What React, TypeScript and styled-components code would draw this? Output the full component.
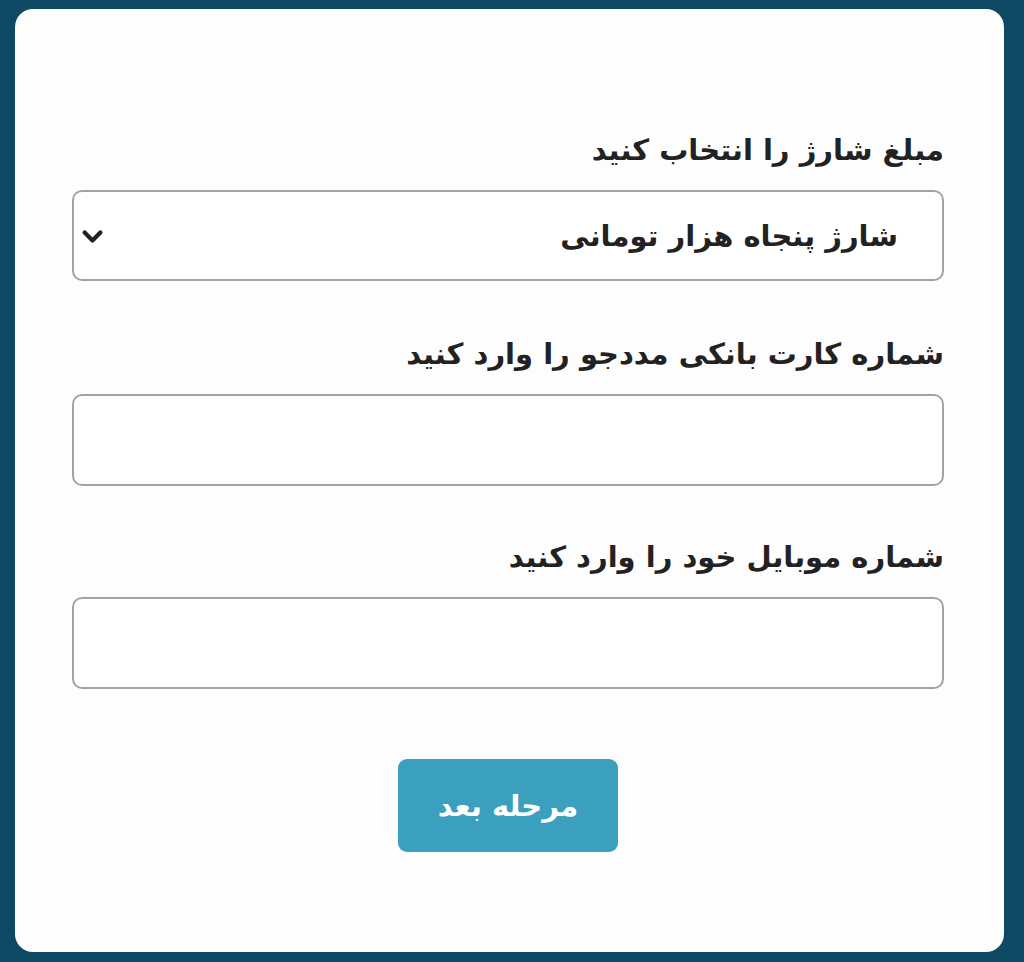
import React, { useState } from "react";
import styled, { createGlobalStyle } from "styled-components";

const GlobalStyle = createGlobalStyle`
  html, body {
    margin: 0;
    padding: 0;
    background-color: #0f4862;
  }
  * {
    box-sizing: border-box;
  }
`;

const options = [
  "شارژ ده هزار تومانی",
  "شارژ بیست هزار تومانی",
  "شارژ پنجاه هزار تومانی",
  "شارژ صد هزار تومانی",
];

const App: React.FC = () => {
  const [amount, setAmount] = useState(options[2]);

  return (
    <>
      <GlobalStyle />
      <Page>
        <Card dir="rtl">
          <Form onSubmit={(e) => e.preventDefault()}>
            <Label htmlFor="amount">مبلغ شارژ را انتخاب کنید</Label>
            <SelectWrap>
              <Select
                id="amount"
                value={amount}
                onChange={(e) => setAmount(e.target.value)}
              >
                {options.map((o) => (
                  <option key={o} value={o}>
                    {o}
                  </option>
                ))}
              </Select>
              <Chevron viewBox="0 0 24 24" aria-hidden="true">
                <path d="M5 8.5l7 7 7-7" />
              </Chevron>
            </SelectWrap>

            <Label htmlFor="card" $gap={53}>
              شماره کارت بانکی مددجو را وارد کنید
            </Label>
            <Input id="card" type="text" />

            <Label htmlFor="mobile" $gap={51}>
              شماره موبایل خود را وارد کنید
            </Label>
            <Input id="mobile" type="text" />

            <Actions>
              <Button type="submit">مرحله بعد</Button>
            </Actions>
          </Form>
        </Card>
      </Page>
    </>
  );
};

export default App;

const Page = styled.div`
  width: 1024px;
  height: 962px;
  padding: 9px 20px 10px 15px;
`;

const Card = styled.div`
  background-color: #fdfdfd;
  height: 100%;
  border-radius: 18px;
  padding: 121px 60px 0 57px;
  font-family: "DejaVu Sans", "Noto Sans", sans-serif;
`;

const Form = styled.form`
  display: flex;
  flex-direction: column;
`;

const Label = styled.label<{ $gap?: number }>`
  display: block;
  margin-top: ${(p) => p.$gap ?? 0}px;
  margin-bottom: 20px;
  font-size: 29px;
  line-height: 40px;
  font-weight: 700;
  color: #222;
  text-align: right;
`;

const SelectWrap = styled.div`
  position: relative;
`;

const Select = styled.select`
  appearance: none;
  width: 100%;
  height: 91px;
  border: 2px solid #a3a3a3;
  border-radius: 10px;
  background: #fff;
  padding: 0 44px 0 60px;
  font-family: inherit;
  font-size: 29px;
  font-weight: 700;
  color: #222;
  direction: rtl;
  outline: none;
`;

const Chevron = styled.svg`
  position: absolute;
  left: 7px;
  top: 50%;
  width: 27px;
  height: 27px;
  margin-top: -13px;
  fill: none;
  stroke: #222;
  stroke-width: 3.8;
  stroke-linecap: round;
  stroke-linejoin: round;
  pointer-events: none;
`;

const Input = styled.input`
  width: 100%;
  height: 92px;
  border: 2px solid #a3a3a3;
  border-radius: 10px;
  background: #fff;
  padding: 0 20px;
  font-family: inherit;
  font-size: 26px;
  outline: none;
`;

const Actions = styled.div`
  display: flex;
  justify-content: center;
  margin-top: 70px;
`;

const Button = styled.button`
  width: 220px;
  height: 93px;
  border: none;
  border-radius: 9px;
  background-color: #3b9fbe;
  color: #fff;
  font-family: inherit;
  font-size: 29px;
  font-weight: 700;
  cursor: pointer;
`;
